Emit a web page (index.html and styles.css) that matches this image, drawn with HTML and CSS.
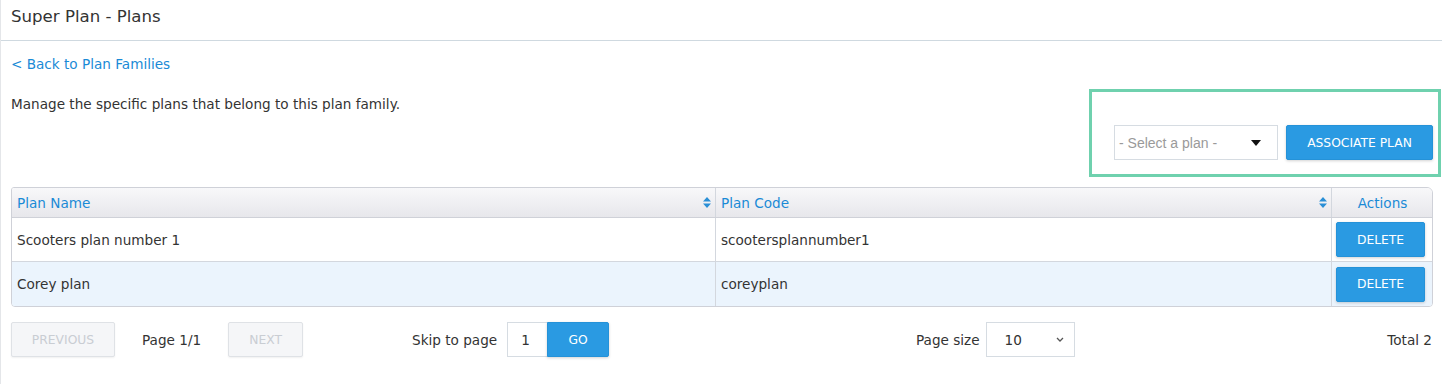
FILE: index.html
```html
<!DOCTYPE html>
<html>
<head>
<meta charset="utf-8">
<link rel="stylesheet" href="styles.css">
</head>
<body>
<div class="page">
  <header class="page-header">
    <h1 class="page-title">Super Plan - Plans</h1>
  </header>
  <div class="content">
    <a class="back-link" href="#">&lt; Back to Plan Families</a>
    <div class="intro-row">
      <p class="intro">Manage the specific plans that belong to this plan family.</p>
      <div class="associate-box">
        <div class="plan-select">
          <span class="plan-select-text">- Select a plan -</span>
          <svg class="caret" width="10" height="6" viewBox="0 0 10 6"><path d="M0 0h10L5 6z" fill="#111"/></svg>
        </div>
        <button class="btn btn-primary btn-associate">ASSOCIATE PLAN</button>
      </div>
    </div>

    <div class="table">
      <div class="row head">
        <div class="cell c-name"><span>Plan Name</span><svg class="sort" width="8" height="11" viewBox="0 0 8 11"><path d="M4 0L8 4.5H0z M4 11L0 6.5H8z" fill="#2a8fd6"/></svg></div>
        <div class="cell c-code"><span>Plan Code</span><svg class="sort" width="8" height="11" viewBox="0 0 8 11"><path d="M4 0L8 4.5H0z M4 11L0 6.5H8z" fill="#2a8fd6"/></svg></div>
        <div class="cell c-actions">Actions</div>
      </div>
      <div class="row body">
        <div class="cell c-name">Scooters plan number 1</div>
        <div class="cell c-code">scootersplannumber1</div>
        <div class="cell c-actions"><button class="btn btn-primary btn-delete">DELETE</button></div>
      </div>
      <div class="row body alt">
        <div class="cell c-name">Corey plan</div>
        <div class="cell c-code">coreyplan</div>
        <div class="cell c-actions"><button class="btn btn-primary btn-delete">DELETE</button></div>
      </div>
    </div>

    <div class="pager">
      <div class="pager-nav">
        <button class="btn btn-disabled btn-prev">PREVIOUS</button>
        <span class="pager-text">Page 1/1</span>
        <button class="btn btn-disabled btn-next">NEXT</button>
      </div>
      <div class="pager-skip">
        <span class="pager-text">Skip to page</span>
        <div class="skip-input">1</div>
        <button class="btn btn-primary btn-go">GO</button>
      </div>
      <div class="pager-size">
        <span class="pager-text">Page size</span>
        <div class="size-select">
          <span>10</span>
          <svg width="8" height="5" viewBox="0 0 8 5"><path d="M1 1l3 3 3-3" fill="none" stroke="#555" stroke-width="1.3"/></svg>
        </div>
      </div>
      <div class="pager-total pager-text">Total 2</div>
    </div>
  </div>
</div>
</body>
</html>
```

FILE: styles.css
```css
* { box-sizing: border-box; }
html, body { margin: 0; padding: 0; background: #fff; }
body {
  font-family: "DejaVu Sans", Verdana, sans-serif;
  font-size: 13.6px;
  color: #333;
}
.page {
  border-left: 1px solid #e4e6e9;
  height: 384px;
  overflow: hidden;
}
.page-header {
  height: 41px;
  border-bottom: 1px solid #cfd9e0;
  padding: 7px 0 0 10px;
}
.page-title {
  margin: 0;
  font-size: 16.6px;
  font-weight: normal;
  line-height: 20px;
  color: #333;
}
.content {
  padding: 0 1px 0 10px;
}
.back-link {
  display: block;
  margin-top: 15px;
  line-height: 16px;
  color: #1a8ad6;
  text-decoration: none;
  width: max-content;
}
.intro-row {
  display: flex;
  justify-content: space-between;
  align-items: flex-start;
  margin-top: 17px;
}
.intro {
  margin: 7px 0 0 0;
  line-height: 16px;
}
.associate-box {
  width: 352px;
  height: 88px;
  border: 3px solid #6fd1ae;
  display: flex;
  align-items: flex-end;
  justify-content: flex-end;
  gap: 8px;
  padding: 0 5px 14px 0;
}
.plan-select {
  width: 164px;
  height: 35px;
  border: 1px solid #d6dce2;
  display: flex;
  align-items: center;
  justify-content: space-between;
  padding: 0 16px 0 4px;
  font-family: "Liberation Sans", Arial, sans-serif;
  font-size: 14px;
  color: #9a9a9a;
}
.btn {
  font-family: "DejaVu Sans", Verdana, sans-serif;
  font-size: 12.3px;
  border-radius: 2px;
  cursor: pointer;
  padding: 0;
}
.btn-primary {
  background: #2a9ae2;
  color: #fff;
  border: 1px solid #2592d8;
  box-shadow: 0 1px 3px rgba(0,0,0,0.18);
}
.btn-associate {
  width: 147px;
  height: 35px;
}
.table {
  margin-top: 10px;
  margin-right: 8px;
  border: 1px solid #cfd1d8;
  border-radius: 3px 6px 4px 4px;
  overflow: hidden;
}
.row {
  display: grid;
  grid-template-columns: 704px 616px 1fr;
}
.row.head {
  height: 30px;
  background: linear-gradient(#f8f8fa, #e7e7eb);
  border-bottom: 1px solid #cfd1d8;
  color: #1a8ad6;
}
.row.body {
  height: 44px;
  border-bottom: 1px solid #d3d7de;
}
.row.body:last-child { border-bottom: none; height: 44px; }
.row.alt { background: #ebf4fd; }
.cell {
  display: flex;
  align-items: center;
  padding: 0 5px;
  border-right: 1px solid #d3d7de;
}
.cell:last-child { border-right: none; }
.head .cell { justify-content: space-between; padding-right: 4px; }
.head .c-actions { justify-content: center; }
.body .c-actions { justify-content: flex-start; padding: 0 4px 0 4px; }
.btn-delete {
  width: 89px;
  height: 35px;
}
.pager {
  display: grid;
  grid-template-columns: 401px 504px 1fr auto;
  align-items: center;
  margin-top: 15px;
  padding-right: 9px;
}
.pager-nav, .pager-skip, .pager-size {
  display: flex;
  align-items: center;
}
.pager-nav { gap: 27px; }
.pager-skip { gap: 10px; }
.pager-size { gap: 6px; }
.pager-text { color: #333; }
.btn-disabled {
  height: 35px;
  background: #f5f6f8;
  border: 1px solid #dfe2e6;
  color: #c9cdd3;
  box-shadow: 0 1px 2px rgba(0,0,0,0.06);
}
.btn-prev { width: 104px; }
.btn-next { width: 75px; }
.skip-input {
  width: 40px;
  height: 35px;
  border: 1px solid #d6dce2;
  border-right: none;
  display: flex;
  align-items: center;
  padding-left: 13px;
}
.pager-skip .btn-go {
  width: 62px;
  height: 35px;
  margin-left: -10px;
  border-radius: 0 2px 2px 0;
}
.size-select {
  width: 89px;
  height: 35px;
  border: 1px solid #d6dce2;
  display: flex;
  align-items: center;
  justify-content: space-between;
  padding: 0 10px 0 18px;
}
.pager-total { text-align: right; }
```
